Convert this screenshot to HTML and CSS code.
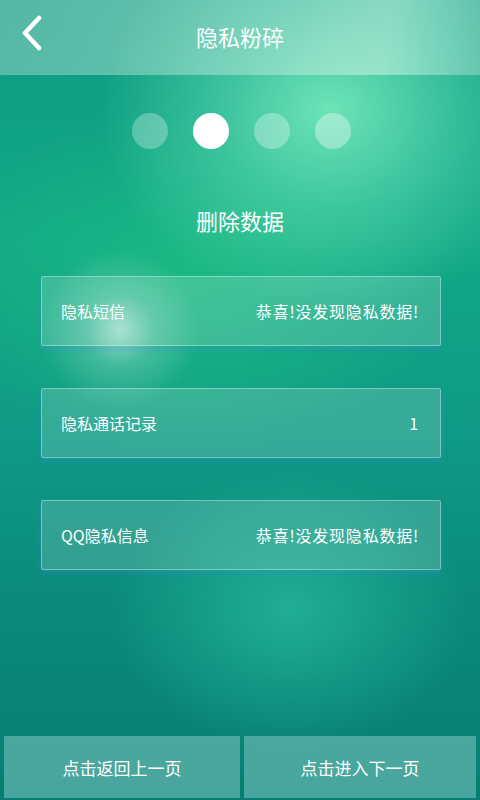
FILE: index.html
```html
<!DOCTYPE html>
<html lang="zh">
<head>
<meta charset="utf-8">
<link rel="stylesheet" href="styles.css">
</head>
<body>
<div class="screen">
  <div class="header">
    <div class="back">
      <svg width="24" height="36" viewBox="0 0 24 36"><path d="M19 3 L5 18 L19 33" fill="none" stroke="#fff" stroke-width="4.5" stroke-linecap="round" stroke-linejoin="round"/></svg>
    </div>
    <div class="title">隐私粉碎</div>
  </div>
  <div class="dots">
    <span class="dot d1"></span>
    <span class="dot active"></span>
    <span class="dot d3"></span>
    <span class="dot d4"></span>
  </div>
  <div class="subtitle">删除数据</div>
  <div class="list">
    <div class="card"><span>隐私短信</span><span class="msg">恭喜!没发现隐私数据!</span></div>
    <div class="card"><span>隐私通话记录</span><span class="msg">1</span></div>
    <div class="card"><span>QQ隐私信息</span><span class="msg">恭喜!没发现隐私数据!</span></div>
  </div>
  <div class="spacer"></div>
  <div class="footer">
    <div class="btn btn-left">点击返回上一页</div>
    <div class="btn btn-right">点击进入下一页</div>
  </div>
</div>
</body>
</html>
```
FILE: styles.css
```css
html, body { margin: 0; padding: 0; }
body {
  width: 480px; height: 800px; overflow: hidden;
  font-family: "Noto Sans CJK SC", "Noto Sans", sans-serif;
  color: #fff;
}
.screen {
  width: 480px; height: 800px;
  display: flex; flex-direction: column;
  background:
    radial-gradient(circle at 120px 330px, rgba(200,235,225,0.75) 0, rgba(200,235,225,0.25) 35px, rgba(200,235,225,0) 80px),
    radial-gradient(ellipse 230px 200px at 330px 110px, rgba(120,235,190,0.9) 0, rgba(100,225,180,0.5) 50%, rgba(100,225,180,0) 100%),
    radial-gradient(ellipse 180px 140px at 290px 610px, rgba(40,190,160,0.7) 0, rgba(40,190,160,0) 100%),
    radial-gradient(ellipse 260px 170px at 190px 280px, rgba(30,190,130,0.8) 0, rgba(30,190,130,0) 100%),
    linear-gradient(180deg, #0d9a82 0%, #12a886 30%, #0f9a85 55%, #0b8a7a 75%, #077e74 100%);
}
.header {
  height: 75px; flex: none;
  display: flex; align-items: center; justify-content: center;
  position: relative;
  background: linear-gradient(100deg, rgba(170,220,210,0.45) 0%, rgba(190,235,220,0.5) 60%, rgba(210,245,230,0.55) 80%, rgba(170,225,210,0.45) 100%);
}
.back { position: absolute; left: 20px; top: 15px; width: 24px; height: 36px; }
.title { font-size: 22px; line-height: 1; margin-top: -4px; }
.dots {
  display: flex; justify-content: center; gap: 25px;
  margin-top: 38px; padding-left: 2px;
}
.dot { width: 36px; height: 36px; border-radius: 50%; background: rgba(255,255,255,0.28); }
.dot.active { background: #fff; }
.d3 { background: rgba(255,255,255,0.3); }
.d4 { background: rgba(255,255,255,0.35); }
.subtitle { text-align: center; font-size: 22px; line-height: 1; margin-top: 60px; }
.list {
  display: flex; flex-direction: column; gap: 42px;
  margin: 45px 39px 0 41px;
}
.card {
  height: 68px;
  display: flex; align-items: center; justify-content: space-between;
  padding: 0 21px 0 19px;
  font-size: 16px;
  background: rgba(255,255,255,0.16);
  border: 1px solid rgba(255,255,255,0.35);
  border-radius: 2px;
  box-shadow: 0 3px 6px rgba(60,140,220,0.35);
}
.msg { letter-spacing: 0.8px; }
.spacer { flex: 1; }
.footer {
  display: flex; gap: 4px;
  padding: 0 4px 2px 4px;
  height: 62px;
}
.btn {
  display: flex; align-items: center; justify-content: center;
  font-size: 17px;
  background: rgba(140,205,200,0.5);
}
.btn-left { flex: 0 0 236px; }
.btn-right { flex: 1; }
```
